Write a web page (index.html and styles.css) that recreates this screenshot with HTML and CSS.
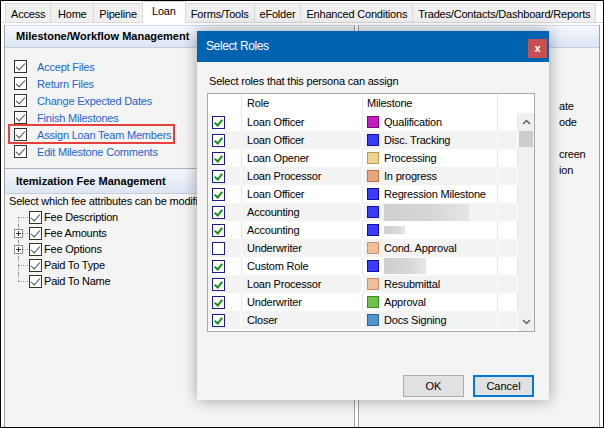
FILE: index.html
```html
<!DOCTYPE html>
<html lang="en">
<head>
    <meta charset="UTF-8">
    <meta name="viewport" content="width=device-width, initial-scale=1.0">
    <title>Persona - Loan</title>
    <link rel="stylesheet" href="styles.css">
</head>
<body onload="loadRoles()">
    <div class="screen">
        <div class="tabs">
            <span class="tab">Access</span>
            <span class="tab">Home</span>
            <span class="tab">Pipeline</span>
            <span class="tab active">Loan</span>
            <span class="tab">Forms/Tools</span>
            <span class="tab">eFolder</span>
            <span class="tab">Enhanced Conditions</span>
            <span class="tab">Trades/Contacts/Dashboard/Reports</span>
        </div>

        <div class="main">
            <div class="pane left">
                <div class="pane-head">Milestone/Workflow Management</div>
                <ul class="perms">
                    <li><span class="cb"></span><a href="#">Accept Files</a></li>
                    <li><span class="cb"></span><a href="#">Return Files</a></li>
                    <li><span class="cb"></span><a href="#">Change Expected Dates</a></li>
                    <li><span class="cb"></span><a href="#">Finish Milestones</a></li>
                    <li class="marked"><span class="cb"></span><a href="#">Assign Loan Team Members</a></li>
                    <li><span class="cb"></span><a href="#">Edit Milestone Comments</a></li>
                </ul>

                <div class="pane-head sub">Itemization Fee Management</div>
                <p class="hint">Select which fee attributes can be modified:</p>
                <ul class="tree">
                    <li><span class="cb"></span>Fee Description</li>
                    <li><span class="plus"></span><span class="cb"></span>Fee Amounts</li>
                    <li><span class="plus"></span><span class="cb"></span>Fee Options</li>
                    <li><span class="cb"></span>Paid To Type</li>
                    <li><span class="cb"></span>Paid To Name</li>
                </ul>
            </div>

            <div class="pane right">
                <div class="pane-head"></div>
                <ul class="perms-right">
                    <li>ate</li>
                    <li>ode</li>
                    <li></li>
                    <li>creen</li>
                    <li>ion</li>
                </ul>
            </div>
        </div>

        <!-- modal: Select Roles -->
        <div class="dialog">
            <div class="dlg-title">
                <span>Select Roles</span>
                <button class="dlg-close">x</button>
            </div>
            <div class="dlg-body">
                <p class="dlg-label">Select roles that this persona can assign</p>
                <div class="grid">
                    <div class="grid-head">
                        <span class="c-chk"></span>
                        <span class="c-role">Role</span>
                        <span class="c-ms">Milestone</span>
                        <span class="c-extra"></span>
                    </div>
                    <div class="grid-body">
                        <div class="rows" id="rows"></div>
                        <div class="vscroll">
                            <span class="arrow">
                                <svg width="9" height="6" viewBox="0 0 9 6"><polyline points="1,5 4.5,1.5 8,5" fill="none" stroke="#606060" stroke-width="1.5"/></svg>
                            </span>
                            <span class="thumb"></span>
                            <span class="track"></span>
                            <span class="arrow">
                                <svg width="9" height="6" viewBox="0 0 9 6"><polyline points="1,1 4.5,4.5 8,1" fill="none" stroke="#606060" stroke-width="1.5"/></svg>
                            </span>
                        </div>
                    </div>
                </div>
                <div class="dlg-buttons">
                    <button class="btn">OK</button>
                    <button class="btn default">Cancel</button>
                </div>
            </div>
        </div>
    </div>

    <script>
        const BLUE = ["#3b3bff", "#1010a0"];
        const PEACH = ["#f0bf9c", "#cf8f66"];

        // role / milestone pairs this persona can assign
        const roles = [
            { on: true,  role: "Loan Officer",   milestone: "Qualification",        color: ["#c21cc2", "#7a087a"] },
            { on: true,  role: "Loan Officer",   milestone: "Disc. Tracking",       color: BLUE },
            { on: true,  role: "Loan Opener",    milestone: "Processing",           color: ["#ead48e", "#b89a52"] },
            { on: true,  role: "Loan Processor", milestone: "In progress",          color: ["#e4a47c", "#b8764e"] },
            { on: true,  role: "Loan Officer",   milestone: "Regression Milestone", color: BLUE },
            { on: true,  role: "Accounting",     hidden: [85, 17],                  color: BLUE },
            { on: true,  role: "Accounting",     hidden: [21, 8],                   color: BLUE },
            { on: false, role: "Underwriter",    milestone: "Cond. Approval",       color: PEACH },
            { on: true,  role: "Custom Role",    hidden: [42, 16],                  color: BLUE },
            { on: true,  role: "Loan Processor", milestone: "Resubmittal",          color: PEACH },
            { on: true,  role: "Underwriter",    milestone: "Approval",             color: ["#6cc24a", "#3a8c26"] },
            { on: true,  role: "Closer",         milestone: "Docs Signing",         color: ["#4c96cc", "#2a6796"] }
        ];

        function loadRoles() {
            const rows = document.getElementById("rows");
            rows.innerHTML = "";
            roles.forEach(item => {
                const row = document.createElement("div");
                row.className = "row";
                const label = item.hidden
                    ? `<span class="redacted" style="width:${item.hidden[0]}px;height:${item.hidden[1]}px"></span>`
                    : `<span>${item.milestone}</span>`;
                row.innerHTML = `
                    <span class="c-chk"><span class="rcb${item.on ? " on" : ""}"></span></span>
                    <span class="c-role">${item.role}</span>
                    <span class="c-ms"><span class="swatch" style="background:${item.color[0]};border-color:${item.color[1]}"></span>${label}</span>
                    <span class="c-extra"></span>
                `;
                rows.appendChild(row);
            });
        }
    </script>
</body>
</html>
```

FILE: styles.css
```css
* {
    box-sizing: border-box;
}
body {
    margin: 0;
    font-family: "Liberation Sans", Arial, sans-serif;
    font-size: 11px;
    letter-spacing: -0.2px;
    color: #000;
}
ul {
    list-style: none;
    margin: 0;
    padding: 0;
}
.screen {
    position: relative;
    width: 604px;
    height: 428px;
    border: 1px solid #000;
    background: #fff;
    display: flex;
    flex-direction: column;
    overflow: hidden;
}

/* tab strip */
.tabs {
    display: flex;
    align-items: flex-end;
    height: 22px;
    padding-left: 4px;
    border-bottom: 1px solid #d9d9d9;
}
.tab {
    height: 19px;
    min-width: 44px;
    padding: 2px 5px 0;
    line-height: 17px;
    text-align: center;
    white-space: nowrap;
    background: #f0f0f0;
    border: 1px solid #d9d9d9;
    border-bottom: none;
    margin-right: -1px;
}
.tab.active {
    height: 22px;
    margin-bottom: -1px;
    padding-top: 0;
    line-height: 19px;
    background: #fff;
    position: relative;
}

/* panes */
.main {
    flex: 1;
    display: flex;
    gap: 3px;
    padding: 2px 3px 0 3px;
}
.pane {
    background: #f4f4f4;
    border-left: 1px solid #a0a0a0;
    border-right: 1px solid #a0a0a0;
    overflow: hidden;
}
.pane.left {
    width: 351px;
}
.pane.right {
    flex: 1;
}
.pane-head {
    height: 23px;
    line-height: 21px;
    padding-left: 11px;
    font-weight: bold;
    letter-spacing: 0;
    white-space: nowrap;
    background: linear-gradient(#f3f6fc, #dce5f3);
    border-top: 1px solid #d6dde8;
    border-bottom: 1px solid #c4cedc;
}
.pane-head.sub {
    height: 26px;
    line-height: 24px;
    border-top-color: #b4b4b4;
}

.perms {
    padding: 10px 0 8px 9px;
}
.perms li {
    display: flex;
    align-items: center;
    gap: 10px;
    height: 17px;
}
.perms a {
    color: #2266cc;
    text-decoration: none;
    white-space: nowrap;
}
.perms li.marked {
    position: relative;
    width: fit-content;
}
.perms li.marked::before {
    content: "";
    position: absolute;
    top: -2px;
    bottom: -1px;
    left: -6px;
    right: -4px;
    border: 2px solid #e8413c;
}

.cb {
    position: relative;
    flex: none;
    width: 13px;
    height: 13px;
    border: 1px solid #333;
    background: #fff;
}
.cb::after {
    content: "";
    position: absolute;
    left: 3px;
    top: 0;
    width: 4px;
    height: 8px;
    border-right: 1.3px solid #4a4a4a;
    border-bottom: 1.3px solid #4a4a4a;
    transform: rotate(42deg);
}

.hint {
    margin: 0;
    padding-left: 4px;
    line-height: 15px;
    white-space: nowrap;
}

/* tree with dotted connectors */
.tree {
    margin-left: 13px;
}
.tree li {
    position: relative;
    display: flex;
    align-items: center;
    gap: 2px;
    height: 16px;
    padding-left: 11px;
    white-space: nowrap;
}
.tree li::before {
    content: "";
    position: absolute;
    left: 0;
    top: 0;
    bottom: 0;
    border-left: 1px dotted #9a9a9a;
}
.tree li:first-child::before {
    top: 8px;
}
.tree li:last-child::before {
    bottom: 8px;
}
.tree li::after {
    content: "";
    position: absolute;
    left: 0;
    top: 8px;
    width: 10px;
    border-top: 1px dotted #9a9a9a;
}
.plus {
    position: absolute;
    left: -4px;
    top: 4px;
    width: 9px;
    height: 9px;
    border: 1px solid #919191;
    background: #fff;
    z-index: 1;
}
.plus::before,
.plus::after {
    content: "";
    position: absolute;
    background: #333;
}
.plus::before {
    left: 1px;
    top: 3px;
    width: 5px;
    height: 1px;
}
.plus::after {
    left: 3px;
    top: 1px;
    width: 1px;
    height: 5px;
}

.perms-right {
    padding: 50px 0 0 200px;
}
.perms-right li {
    height: 16px;
    line-height: 16px;
}

/* dialog */
.dialog {
    position: absolute;
    left: 196px;
    top: 30px;
    width: 352px;
    height: 369px;
    background: #f4f4f4;
    box-shadow: 0 0 14px rgba(0, 0, 0, 0.35);
    display: flex;
    flex-direction: column;
}
.dlg-title {
    height: 31px;
    flex: none;
    display: flex;
    align-items: flex-start;
    background: #0063b1;
    color: #fff;
}
.dlg-title span {
    padding-left: 9px;
    line-height: 31px;
    font-size: 12px;
    letter-spacing: -0.4px;
}
.dlg-close {
    margin: 8px 2px 0 auto;
    width: 19px;
    height: 19px;
    padding: 0;
    border: 0;
    background: #c75050;
    color: #fff;
    font: bold 11px/17px "Liberation Sans", Arial, sans-serif;
}
.dlg-body {
    flex: 1;
    display: flex;
    flex-direction: column;
    padding: 0 14px 3px 10px;
}
.dlg-label {
    margin: 12px 0 5px 2px;
    line-height: 14px;
    white-space: nowrap;
}

.grid {
    border: 1px solid #a9a9a9;
    background: #fff;
}
.grid-head {
    display: flex;
    height: 19px;
    line-height: 19px;
}
.grid-head span,
.row > span {
    border-right: 1px solid #e6e6e6;
    white-space: nowrap;
    overflow: hidden;
}
.c-chk {
    flex: none;
    width: 34px;
    padding-left: 4px;
    display: flex;
    align-items: center;
}
.c-role {
    flex: none;
    width: 121px;
    padding-left: 5px;
}
.c-ms {
    flex: none;
    width: 135px;
    padding-left: 4px;
    display: flex;
    align-items: center;
    gap: 5px;
}
.grid-head .c-ms {
    padding-left: 4px;
}
.c-extra {
    flex: 1;
}
.grid-head .c-extra {
    border-right: none;
}

.grid-body {
    display: flex;
    height: 218px;
}
.rows {
    flex: 1;
    overflow: hidden;
}
.row {
    display: flex;
    height: 18px;
    line-height: 18px;
}
.row:nth-child(even) {
    background: #f3f3f3;
}
.row:nth-child(even) > span {
    border-right-color: #fff;
}
.rcb {
    position: relative;
    width: 13px;
    height: 13px;
    border: 1px solid #1c1c8e;
    background: #fff;
}
.rcb.on::after {
    content: "";
    position: absolute;
    left: 3px;
    top: 1px;
    width: 3px;
    height: 6px;
    border-right: 2px solid #129212;
    border-bottom: 2px solid #129212;
    transform: rotate(40deg);
}
.swatch {
    flex: none;
    width: 12px;
    height: 12px;
    border: 1px solid;
}
.redacted {
    flex: none;
    background: linear-gradient(90deg, #cfcfcf, #d6d6d6 55%, #e6e6e6);
    filter: blur(0.7px);
}

.vscroll {
    width: 16px;
    background: #f0f0f0;
    display: flex;
    flex-direction: column;
}
.vscroll .arrow {
    height: 18px;
    display: flex;
    align-items: center;
    justify-content: center;
}
.vscroll .thumb {
    height: 16px;
    margin: 0 1px;
    background: #cdcdcd;
}
.vscroll .track {
    flex: 1;
}

.dlg-buttons {
    margin-top: auto;
    display: flex;
    justify-content: flex-end;
    gap: 9px;
    padding-right: 1px;
}
.btn {
    width: 61px;
    height: 22px;
    padding: 0;
    background: #e1e1e1;
    border: 1px solid #adadad;
    font: 11px "Liberation Sans", Arial, sans-serif;
    color: #000;
}
.btn.default {
    border: 2px solid #0078d7;
}
```
